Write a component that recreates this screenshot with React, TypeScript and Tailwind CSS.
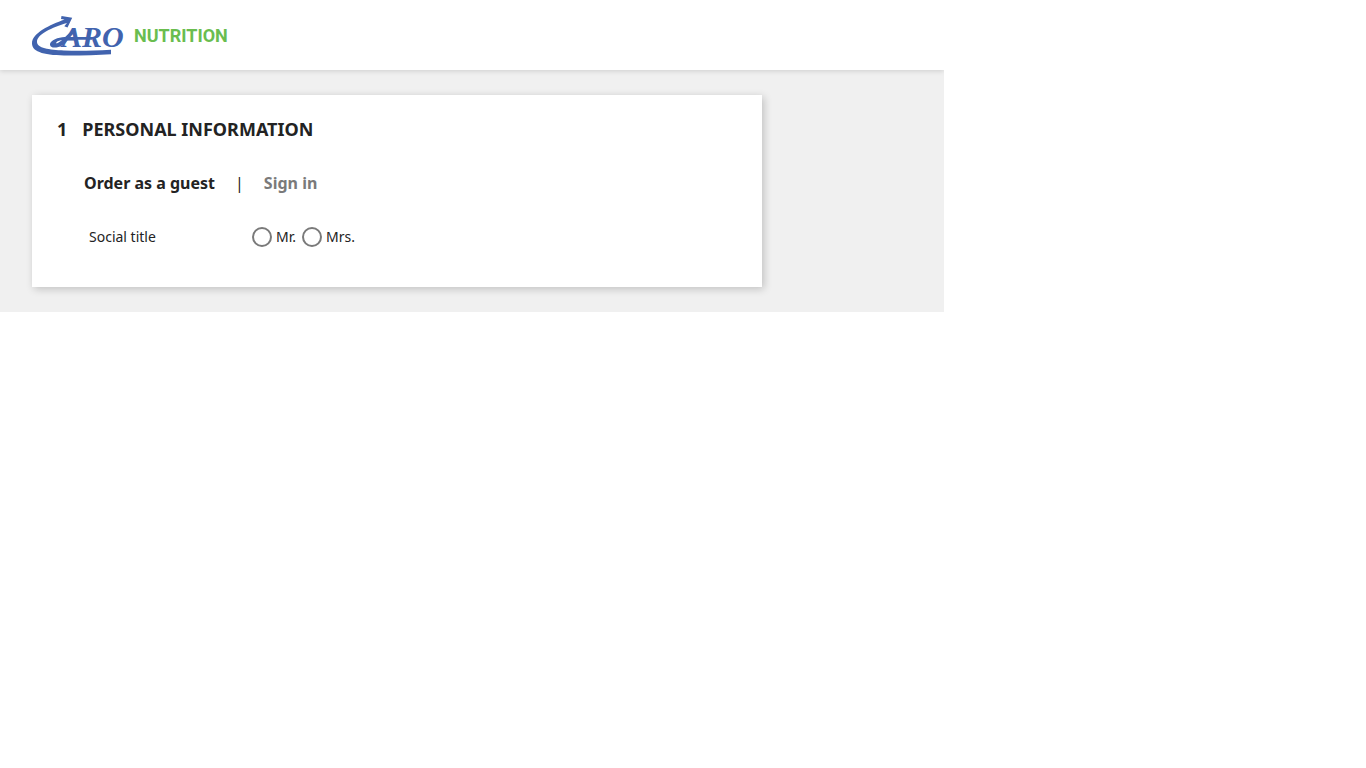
import React, { useState } from "react";

const TITLES = ["Mr.", "Mrs."];

const Logo: React.FC = () => (
  <svg
    viewBox="0 0 200 42"
    className="h-[42px] w-[200px]"
    role="img"
    aria-label="Caro Nutrition"
  >
    {/* long arrow that forms the C */}
    <path
      d="M40.200 3.800 L29.500 2 L29 5 L32.500 5.600 C18 11 0 19 0 29.500 C0 38.500 14 41.500 36 41.500 C52 41.500 66 41 79 40.200 V35.800 C60 36.800 46 37.200 32 36.500 C17 35.800 5 34 5 28 C5 20 20 13.500 35 9 L32.300 12.300 L35.500 13.500 Z"
      fill="#4163ae"
    />
    {/* tail and crossbar of the A */}
    <path
      d="M34 23 C27 22.500 18.500 26.500 18 30 C17.500 34.500 25 34.500 30 31.500 C34 29 38 23 43 18 L40.500 16 C35 21 29 28 24.500 29.500 C23 28 28 25.800 34 25.800 H60 V23 Z"
      fill="#4163ae"
    />
    <text
      x="30"
      y="33"
      fill="#4163ae"
      className="font-['Liberation_Serif',serif] text-[30px] font-bold italic"
    >
      ARO
    </text>
    <text
      x="102"
      y="28"
      fill="#6abd4f"
      className="font-['Roboto',sans-serif] text-[18px] font-bold"
    >
      NUTRITION
    </text>
  </svg>
);

const SocialTitle: React.FC = () => {
  const [title, setTitle] = useState("");

  return (
    <fieldset className="flex items-center pl-8 text-sm">
      <legend className="float-left w-[163px]">Social title</legend>
      <div className="flex gap-1.5">
        {TITLES.map((name) => (
          <label key={name} className="flex items-center gap-1">
            <input
              type="radio"
              name="social-title"
              value={name}
              checked={title === name}
              onChange={() => setTitle(name)}
              className="size-5 appearance-none rounded-full border-2 border-[#7a7a7a] bg-white checked:border-[6px]"
            />
            {name}
          </label>
        ))}
      </div>
    </fieldset>
  );
};

const App: React.FC = () => {
  return (
    <div className="w-full max-w-[944px] overflow-hidden font-['Noto_Sans',sans-serif] text-[#232323]">
      <header className="relative flex h-[70px] items-center bg-white px-8 shadow-[0_1px_5px_0_rgba(0,0,0,0.15)]">
        <a href="#">
          <Logo />
        </a>
      </header>
      <main className="bg-[#f0f0f0] px-8 py-[25px]">
        <section className="w-full max-w-[730px] bg-white px-[25px] pt-5 pb-10 shadow-[2px_2px_8px_0_rgba(0,0,0,0.2)]">
          <h1 className="flex gap-[15px] text-lg font-bold uppercase">
            <span>1</span>
            Personal Information
          </h1>
          <nav className="mt-7 flex gap-5 pl-[27px] text-base font-bold">
            <a href="#guest">Order as a guest</a>
            <span className="font-normal" aria-hidden="true">
              |
            </span>
            <a href="#login" className="text-[#7a7a7a]">
              Sign in
            </a>
          </nav>
          <div className="mt-8">
            <SocialTitle />
          </div>
        </section>
      </main>
    </div>
  );
};

export default App;
